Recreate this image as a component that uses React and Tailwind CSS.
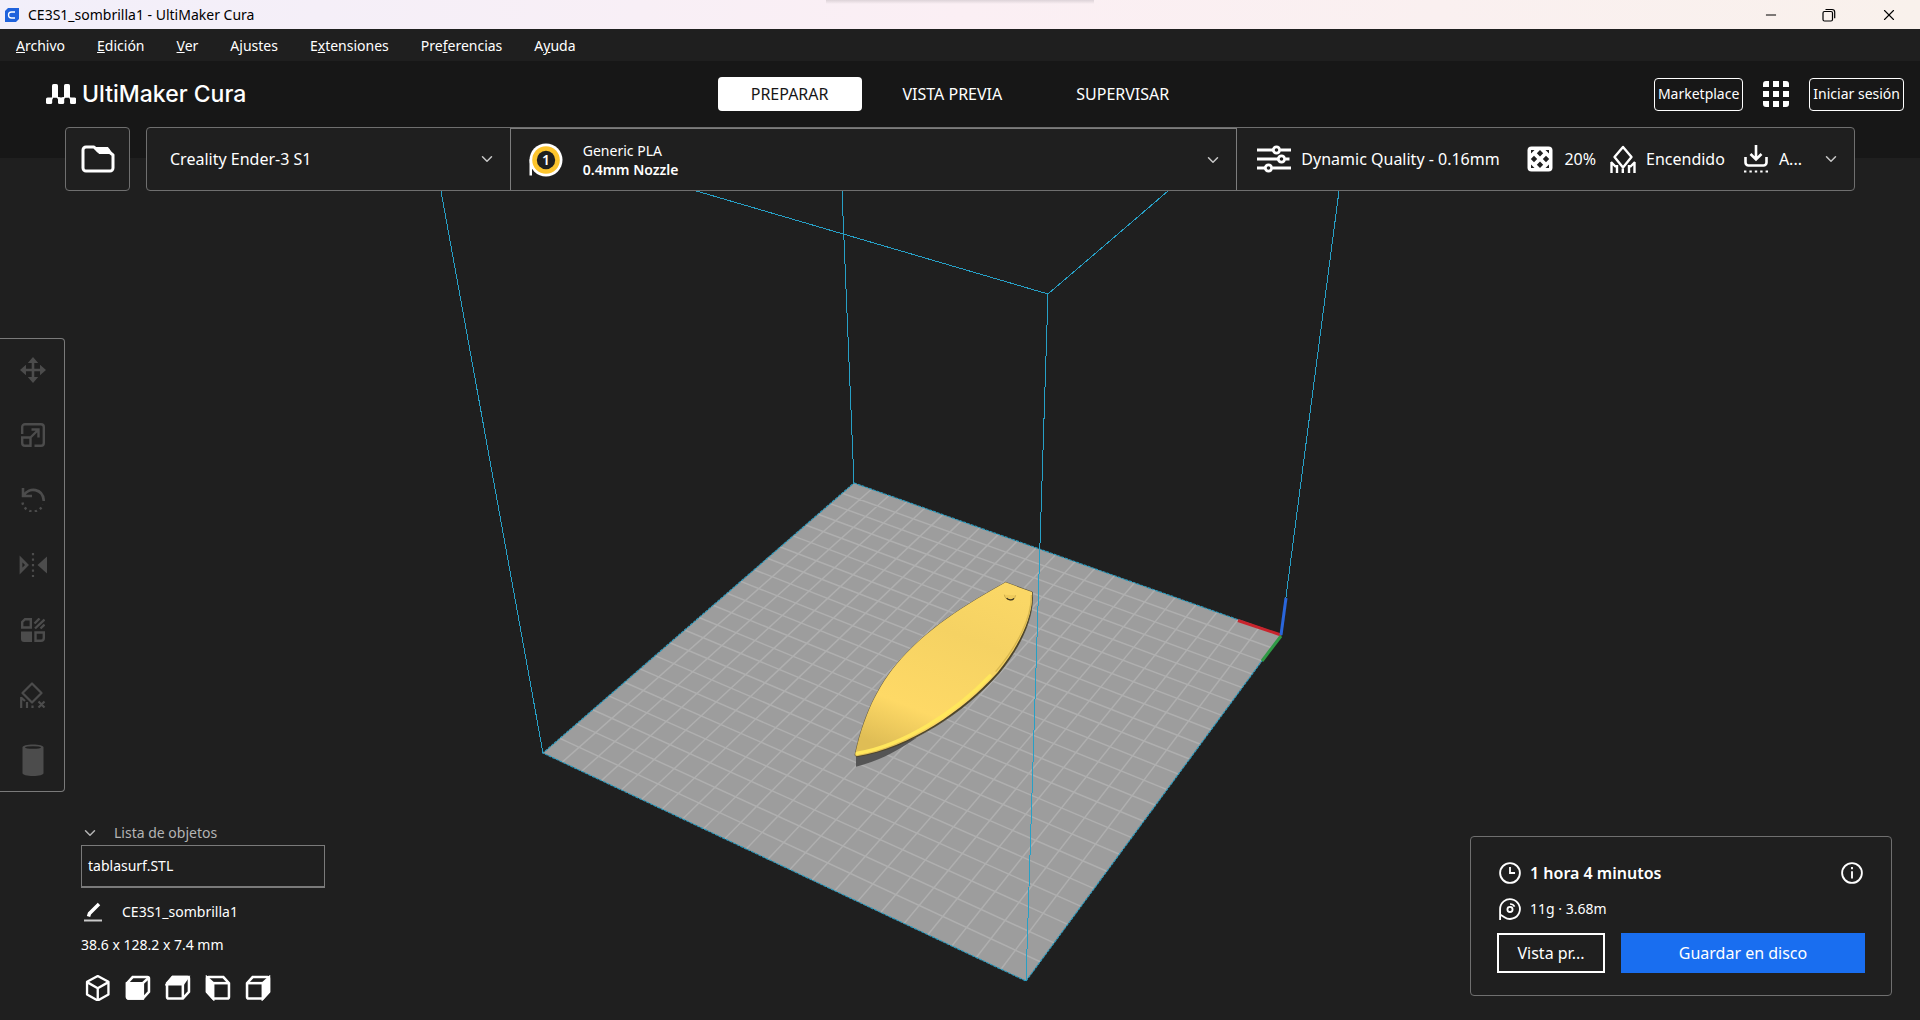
import { ChevronDown, Minus, X } from "lucide-react";

const menus = [
  ["", "A", "rchivo"],
  ["", "E", "dición"],
  ["", "V", "er"],
  ["A", "j", "ustes"],
  ["E", "x", "tensiones"],
  ["Pre", "f", "erencias"],
  ["A", "y", "uda"],
];

const stages = [
  { label: "PREPARAR", active: true },
  { label: "VISTA PREVIA", active: false },
  { label: "SUPERVISAR", active: false },
];

function Icon({ className = "h-6 w-6", children, ...props }) {
  return (
    <svg viewBox="0 0 24 24" fill="none" stroke="currentColor" strokeWidth="2" className={`shrink-0 ${className}`} aria-hidden="true" {...props}>
      {children}
    </svg>
  );
}

function MoveIcon() {
  return (
    <Icon className="h-[26px] w-[26px]" strokeWidth="2.4">
      <path d="M12 3v18M3 12h18" />
      <path d="M12 0l4.8 5.500H7.200zM12 24l4.800-5.500H7.200zM0 12l5.500-4.800v9.600zM24 12l-5.500-4.800v9.600z" fill="currentColor" stroke="none" />
    </Icon>
  );
}

function ScaleIcon() {
  return (
    <Icon strokeWidth="2.4">
      <path d="M1.2 11V4a2.8 2.8 0 0 1 2.8-2.8h16A2.8 2.8 0 0 1 22.8 4v16a2.8 2.8 0 0 1-2.8 2.8h-6.5" />
      <path d="M1.2 14.5h8.300v8.300H4a2.800 2.800 0 0 1-2.800-2.800zM9.500 14.500l8-8M10.500 6.500h7v8" />
    </Icon>
  );
}

function RotateIcon() {
  return (
    <Icon>
      <path d="M2 0v8h9M3 7C8-1 22 0 22.8 13" strokeWidth="2.6" />
      <path d="M1.5 14.5a10.6 10.6 0 0 0 20.5 2" strokeWidth="2.4" strokeDasharray="2.4 3.2" />
    </Icon>
  );
}

function MirrorIcon() {
  return (
    <Icon className="h-7 w-7" viewBox="-1 -2 28 28">
      <path d="M13 0v24" strokeWidth="2.2" strokeDasharray="2.2 3.3" />
      <path d="M1 6v12l6-6z" strokeWidth="2.8" />
      <path d="M27 3.500v17L17.500 12z" fill="currentColor" stroke="none" />
    </Icon>
  );
}

function PerModelIcon() {
  return (
    <Icon strokeWidth="2.4">
      <path d="M4 1.200h5.800v8.300H1.200V4zM14.500 14.500h8.300V20a2.800 2.800 0 0 1-2.800 2.800h-5.500z" />
      <path d="M0 13.500h11V24H3a3 3 0 0 1-3-3z" fill="currentColor" stroke="none" />
      <path d="M13.500 5.500L18.500.500M14 10.500L23.500 1.500M19.500 10.500l4-4" />
    </Icon>
  );
}

function BlockerIcon() {
  return (
    <Icon className="h-[26px] w-[26px]" viewBox="0 0 26 26" strokeWidth="2.2">
      <path d="M12 1.500l9.500 9.500-9.500 9.500L2.500 11z" strokeLinejoin="round" />
      <path d="M1.200 15v11M7 20v6M12.500 23.500v2.500M1 15.500l4 3.500M18.500 19.500l6 6M24.500 19.500l-6 6" />
    </Icon>
  );
}

function CylinderIcon() {
  return (
    <Icon className="h-8 w-6" viewBox="0 0 24 32">
      <path d="M1.500 3.500C1.500 1.500 6 .500 12 .500s10.500 1 10.500 3V29c0 2-4.500 3-10.500 3S1.500 31 1.500 29z" fill="currentColor" stroke="none" />
      <ellipse cx="12" cy="3.500" rx="8" ry="1.300" fill="#1f1f1f" stroke="none" />
    </Icon>
  );
}

const tools = [
  { label: "Mover", Glyph: MoveIcon },
  { label: "Escalar", Glyph: ScaleIcon },
  { label: "Rotar", Glyph: RotateIcon },
  { label: "Espejo", Glyph: MirrorIcon },
  { label: "Ajustes por modelo", Glyph: PerModelIcon },
  { label: "Bloqueador de soporte", Glyph: BlockerIcon },
  { label: "Cilindro", Glyph: CylinderIcon },
];

const cubeOutline = "M7 1.500h14.500a1.500 1.500 0 0 1 1.500 1.500v13l-6 6.500H3A1.500 1.500 0 0 1 1.500 21V7.500z";

const views = [
  {
    label: "Vista 3D",
    art: (
      <g strokeWidth="2.3" strokeLinejoin="round">
        <path d="M12 .5l10.500 5.700v12.400L12 24.500 1.500 18.600V6.200z" />
        <path d="M1.500 6.500L12 12.500l10.500-6M12 12.500v12" />
      </g>
    ),
  },
  {
    label: "Vista frontal",
    art: (
      <>
        <path d={cubeOutline} />
        <path d="M1.500 7.500H17v15H3L1.500 21z" fill="currentColor" />
        <path d="M17 7.500L23 2" />
      </>
    ),
  },
  {
    label: "Vista superior",
    art: (
      <>
        <path d={cubeOutline} />
        <path d="M7 1.500h15L17 8.500H1.500z" fill="currentColor" />
        <path d="M17 8v14.500" />
      </>
    ),
  },
  {
    label: "Vista izquierda",
    art: (
      <g transform="matrix(-1 0 0 1 24.5 0)">
        <path d={cubeOutline} />
        <path d="M1.500 7.500H17" />
        <path d="M17 7.500L23 2v14l-6 6.500z" fill="currentColor" />
      </g>
    ),
  },
  {
    label: "Vista derecha",
    art: (
      <>
        <path d={cubeOutline} />
        <path d="M1.500 7.500H17" />
        <path d="M17 7.500L23 2v14l-6 6.500z" fill="currentColor" />
      </>
    ),
  },
];

// Projects plate coordinates (0..1 on both axes) onto the canvas.
const [p0, p1, p2, p3] = [[854, 483], [1281, 635], [1026, 981], [543, 753]];
const dx1 = p1[0] - p2[0];
const dx2 = p3[0] - p2[0];
const dx3 = p0[0] - p1[0] + p2[0] - p3[0];
const dy1 = p1[1] - p2[1];
const dy2 = p3[1] - p2[1];
const dy3 = p0[1] - p1[1] + p2[1] - p3[1];
const det = dx1 * dy2 - dx2 * dy1;
const g = (dx3 * dy2 - dx2 * dy3) / det;
const h = (dx1 * dy3 - dx3 * dy1) / det;

function project(u, v) {
  const w = g * u + h * v + 1;
  const x = ((p1[0] - p0[0] + g * p1[0]) * u + (p3[0] - p0[0] + h * p3[0]) * v + p0[0]) / w;
  const y = ((p1[1] - p0[1] + g * p1[1]) * u + (p3[1] - p0[1] + h * p3[1]) * v + p0[1]) / w;
  return `${x.toFixed(2)} ${y.toFixed(2)}`;
}

const CELLS = 22;
const gridPath = Array.from({ length: CELLS - 1 }, (_, i) => {
  const t = (i + 1) / CELLS;
  return `M${project(t, 0)}L${project(t, 1)}M${project(0, t)}L${project(1, t)}`;
}).join("");

function BuildVolume() {
  return (
    <svg viewBox="0 191 1920 829" preserveAspectRatio="xMidYMid slice" className="absolute inset-0 h-full w-full" role="img" aria-label="Volumen de impresión">
      <defs>
        <linearGradient id="board" x1="0.7" y1="0" x2="0.3" y2="1">
          <stop offset="0" stopColor="#fad766" />
          <stop offset="0.3" stopColor="#f5d263" />
          <stop offset="0.75" stopColor="#fed966" />
          <stop offset="1" stopColor="#dfbd55" />
        </linearGradient>
      </defs>
      <path d="M854 483L1281 635L1026 981L543 753z" fill="#9d9d9d" />
      <path d={gridPath} stroke="#afafaf" strokeWidth="1.5" fill="none" />
      <path d="M854 483L1281 635L1026 981L543 753z" stroke="#2a9cc0" strokeWidth="1.2" strokeDasharray="3 1" fill="none" />

      <g transform="translate(840 570) scale(0.3333)">
        <path d="M48 550V590C110 575 170 545 230 503z" fill="#555555" />
        <path d="M45 556C62 470 100 365 170 282C245 195 330 130 497 37L577 66C584 140 542 230 477 310C375 425 215 535 50 560z" fill="#4b4328" stroke="#4b4328" strokeWidth="2" />
        <path d="M45 556C62 470 100 365 170 282C245 195 330 130 497 37L576 66C581 140 537 229 472 308C370 421 212 531 50 559z" fill="url(#board)" />
        <path d="M574 75C576 140 534 226 467 305" stroke="#d9b850" strokeWidth="4" fill="none" />
        <path d="M52 550C190 527 345 428 450 318" stroke="#ffe75c" strokeWidth="11" fill="none" strokeLinecap="round" />
        <path d="M493 74c2 20 30 22 34 2" stroke="#b89a42" strokeWidth="2" fill="#efcb5c" />
        <path d="M500 84c4 7 17 8 22 1" stroke="#3c3520" strokeWidth="4" fill="none" />
      </g>

      <g stroke="#27a0c6" strokeWidth="1" fill="none" shapeRendering="crispEdges">
        <path d="M441 191L543 753M842 191L854 483M1339 191L1281 635" />
        <path d="M693 190L1048 294L1168 191M1048 294L1026 981" />
      </g>
      <path d="M1238 620.5L1281 635" stroke="#c9242c" strokeWidth="3" />
      <path d="M1281 636L1262 661" stroke="#2f9a45" strokeWidth="3" />
      <path d="M1281 635L1286 598" stroke="#2a66dc" strokeWidth="3" />
    </svg>
  );
}

function TitleBar() {
  return (
    <div className="relative flex h-[29px] items-center bg-linear-to-r from-[#f2effa] via-[#fbeff4] to-[#f9f1ec] pl-1 text-black">
      <div className="absolute top-0 left-1/2 h-1 w-[268px] -translate-x-1/2 bg-linear-to-b from-[#ddd3d8] to-transparent" />
      <svg viewBox="0 0 16 16" className="h-4 w-4" aria-hidden="true">
        <path d="M4 1h11v11l-3 3H1V4z" fill="#1f62dc" />
        <path d="M11 5H7.500a3 3 0 0 0 0 6H11" stroke="#fff" strokeWidth="1.3" fill="none" />
      </svg>
      <h1 className="ml-2 text-sm">CE3S1_sombrilla1 - UltiMaker Cura</h1>
      <div className="ml-auto flex h-full">
        <button aria-label="Minimizar" className="grid w-[58px] place-items-center">
          <Minus className="h-4 w-4" strokeWidth={1.5} />
        </button>
        <button aria-label="Restaurar" className="grid w-[58px] place-items-center">
          <svg viewBox="0 0 14 14" className="h-3.5 w-3.5" fill="none" stroke="currentColor" strokeWidth="1.2" aria-hidden="true">
            <rect x="1" y="3.5" width="9.5" height="9.5" rx="1.5" />
            <path d="M3.500 1.500H10a2.700 2.700 0 0 1 2.700 2.700v6" />
          </svg>
        </button>
        <button aria-label="Cerrar" className="grid w-[62px] place-items-center">
          <X className="h-[18px] w-[18px]" strokeWidth={1.5} />
        </button>
      </div>
    </div>
  );
}

function MenuBar() {
  return (
    <nav className="flex h-8 items-center gap-8 px-4 pt-[2px] text-sm">
      {menus.map(([before, key, after]) => (
        <button key={before + key + after}>
          {before}
          <span className="underline">{key}</span>
          {after}
        </button>
      ))}
    </nav>
  );
}

function StageBar() {
  return (
    <header className="grid h-[66px] grid-cols-[1fr_auto_1fr] items-center px-4">
      <div className="flex items-center gap-[6px] pl-[30px]">
        <svg viewBox="0 0 30 20" className="h-5 w-[30px]" fill="currentColor" aria-hidden="true">
          <rect x="0" y="13.5" width="6.2" height="6.5" rx="1.6" />
          <rect x="12" y="13.5" width="6.2" height="6.5" rx="1.6" />
          <rect x="24" y="13.5" width="6.2" height="6.5" rx="1.6" />
          <rect x="6" y="0" width="6" height="13.8" rx="1.6" />
          <rect x="18" y="0" width="6" height="13.8" rx="1.6" />
          <path d="M4.500 14L7.500 12.500 6.500 15.500zM10 12.500l4.500 1-2 2.500zM20 12.500l-4.500 1 2 2.500zM22.500 12.500l3.500 1.500-2 1.500z" />
        </svg>
        <span className="font-['Inter'] text-[23px] leading-6 font-medium">UltiMaker Cura</span>
      </div>
      <nav className="flex gap-2">
        {stages.map(({ label, active }) => (
          <button key={label} className={`h-[34px] rounded-sm px-[33px] text-base ${active ? "bg-white text-[#171717]" : ""}`}>
            {label}
          </button>
        ))}
      </nav>
      <div className="flex items-center justify-end gap-5">
        <button className="h-[33px] rounded-sm border border-white px-[3px] text-sm">Marketplace</button>
        <button aria-label="Aplicaciones">
          <svg viewBox="0 0 26 26" className="h-[26px] w-[26px]" fill="currentColor" aria-hidden="true">
            <path d="M3 0h3v6H0V3a3 3 0 0 1 3-3zM10 0h6v6h-6zM20 0h3a3 3 0 0 1 3 3v3h-6zM0 10h6v6H0zM10 10h6v6h-6zM20 10h6v6h-6zM0 20h6v6H3a3 3 0 0 1-3-3zM10 20h6v6h-6zM20 20h6v3a3 3 0 0 1-3 3h-3z" />
          </svg>
        </button>
        <button className="h-[33px] rounded-sm border border-white px-[3px] text-sm">Iniciar sesión</button>
      </div>
    </header>
  );
}

function ConfigBar() {
  return (
    <div className="flex gap-4 px-[65px]">
      <button aria-label="Abrir archivo" className="grid h-16 w-[65px] shrink-0 place-items-center rounded-sm border border-[#6f6f6f] bg-[#1f1f1f]">
        <svg viewBox="0 0 34 28" className="h-7 w-[34px]" fill="none" stroke="currentColor" strokeWidth="3" strokeLinejoin="round" aria-hidden="true">
          <path d="M2 5a3 3 0 0 1 3-3h8l4 4h10l5 4v13a3 3 0 0 1-3 3H5a3 3 0 0 1-3-3z" />
          <path d="M13 2.500h14l4 6H18z" fill="currentColor" strokeWidth="1" />
        </svg>
      </button>
      <div className="grid h-16 flex-1 grid-cols-[363fr_728fr_617fr] rounded-sm border border-[#6f6f6f] bg-[#1f1f1f]">
        <button className="flex items-center justify-between pr-[14px] pl-[23px] text-base">
          Creality Ender-3 S1
          <ChevronDown className="h-[18px] w-[18px] text-[#c8c8c8]" />
        </button>
        <button className="flex items-center border-x border-t border-[#7d7d7d] pr-[14px] pl-[18px] text-left">
          <svg viewBox="0 0 34 34" className="h-[34px] w-[34px]" aria-hidden="true">
            <circle cx="17" cy="17" r="16.5" fill="#fff" />
            <path d="M.5 16v16.500h2.500V26h4z" fill="#fff" />
            <circle cx="17" cy="17" r="13.8" fill="#fcc42d" />
            <circle cx="17" cy="17" r="9.2" fill="#1f1f1f" />
            <text x="17" y="22" textAnchor="middle" fontSize="14" fontWeight="600" fill="#fff">1</text>
          </svg>
          <span className="ml-5 flex flex-1 flex-col text-sm leading-[19px]">
            <span>Generic PLA</span>
            <span className="font-semibold">0.4mm Nozzle</span>
          </span>
          <ChevronDown className="h-[18px] w-[18px] text-[#c8c8c8]" />
        </button>
        <button className="flex items-center pr-[14px] pl-5 text-base whitespace-nowrap">
          <svg viewBox="0 0 34 28" className="h-7 w-[34px]" fill="none" stroke="currentColor" strokeWidth="2.8" aria-hidden="true">
            <path d="M0 5h16M24 5h10M0 14h21M29 14h3.500M0 23h8M16 23h18" />
            <circle cx="19.5" cy="5" r="3.2" />
            <circle cx="24.5" cy="14" r="3.2" />
            <circle cx="11.5" cy="23" r="3.2" />
          </svg>
          <span className="ml-[10px]">Dynamic Quality - 0.16mm</span>
          <svg viewBox="0 0 26 26" className="ml-auto h-[26px] w-[26px]" aria-hidden="true">
            <rect x="0.5" y="0.5" width="25" height="25" rx="4" fill="currentColor" />
            <path
              d="M13 4l3.200 3.300L13 10.600 9.800 7.300zM13 15.400l3.200 3.300L13 22 9.800 18.700zM7 9.700l3.200 3.300L7 16.300 3.800 13zM19 9.700l3.200 3.300-3.200 3.300-3.200-3.300zM4 4h3.500L4 7.500zM22 4v3.500L18.500 4zM4 22v-3.500L7.500 22zM22 22h-3.500l3.500-3.500z"
              fill="#1f1f1f"
            />
          </svg>
          <span className="ml-[11px]">20%</span>
          <svg viewBox="0 0 26 28" className="ml-[14px] h-7 w-[26px]" fill="none" stroke="currentColor" strokeWidth="2.4" aria-hidden="true">
            <path d="M13 2l8.500 10L13 22.500 4.500 12z" strokeLinejoin="round" />
            <path d="M1.500 17v11M7 20v8M12.800 23.500v4.500M19 20v8M24.500 17v11M1 17l5 5M25 17l-5 5" />
          </svg>
          <span className="ml-[10px]">Encendido</span>
          <svg viewBox="0 0 26 28" className="ml-[18px] h-7 w-[26px]" fill="none" stroke="currentColor" strokeWidth="2.6" aria-hidden="true">
            <path d="M13 0v13M7.500 9l5.500 5.500L18.500 9M2.500 12v5.500a3 3 0 0 0 3 3h15a3 3 0 0 0 3-3V12" />
            <path d="M1 26.500h24" strokeWidth="2.2" strokeDasharray="2.4 3" />
          </svg>
          <span className="ml-[10px]">A...</span>
          <ChevronDown className="ml-5 h-[18px] w-[18px] text-[#c8c8c8]" />
        </button>
      </div>
    </div>
  );
}

function Toolbar() {
  return (
    <aside className="relative mt-[147px] flex w-[65px] flex-col gap-[3px] rounded-r-sm border border-l-0 border-[#7a7a7a] bg-[#1f1f1f] text-[#4c4c4c]">
      {tools.map(({ label, Glyph }) => (
        <button key={label} aria-label={label} disabled className="grid h-[62px] place-items-center pl-[2px]">
          <Glyph />
        </button>
      ))}
    </aside>
  );
}

function ObjectList() {
  return (
    <section className="w-[244px] text-sm">
      <button className="flex h-6 items-center gap-[15px] text-[#b4b4b4]">
        <ChevronDown className="h-[18px] w-[18px]" />
        Lista de objetos
      </button>
      <button className="flex h-[43px] w-full items-center border border-b-2 border-[#7a7a7a] px-[6px]">tablasurf.STL</button>
      <button className="mt-3 flex h-6 items-center gap-[19px]">
        <svg viewBox="0 0 20 20" className="ml-[2px] h-5 w-5" fill="none" stroke="currentColor" aria-hidden="true">
          <path d="M5.500 14.500l1-3L16 2" strokeWidth="3.5" />
          <path d="M1 18.500h18" strokeWidth="2" stroke="#c9c9c9" />
        </svg>
        CE3S1_sombrilla1
      </button>
      <p className="mt-[9px] h-6 leading-6">38.6 x 128.2 x 7.4 mm</p>
      <div className="mt-[18px] flex gap-[14px] pl-1">
        {views.map(({ label, art }) => (
          <button key={label} aria-label={label}>
            <Icon className="h-[26px] w-[26px]" viewBox="-0.5 -0.5 25.5 25.5" strokeWidth="2.5">
              {art}
            </Icon>
          </button>
        ))}
      </div>
    </section>
  );
}

function ActionPanel() {
  return (
    <section className="mb-[5px] w-[422px] rounded-sm border border-[#6f6f6f] bg-[#1f1f1f] px-[26px] pt-[25px] pb-[22px]">
      <div className="flex h-[22px] items-center px-[2px]">
        <Icon className="h-[22px] w-[22px]">
          <circle cx="12" cy="12" r="10.8" />
          <path d="M12 5.500V12h5.500" />
        </Icon>
        <strong className="ml-[9px] flex-1 text-base leading-[22px] font-semibold">1 hora 4 minutos</strong>
        <button aria-label="Información">
          <Icon className="h-[22px] w-[22px]">
            <circle cx="12" cy="12" r="10.8" />
            <path d="M12 10v8M12 5.500v2.500" />
          </Icon>
        </button>
      </div>
      <div className="mt-[14px] flex h-[22px] items-center pl-[2px]">
        <Icon className="h-[22px] w-[22px]">
          <path d="M1.200 24V12A10.800 10.800 0 1 1 6 21L1.200 18" />
          <circle cx="12" cy="12.5" r="2.8" />
          <path d="M12 6.500c2 0 4 1 5 3" strokeWidth="1.8" />
        </Icon>
        <span className="ml-[9px] text-sm">11g · 3.68m</span>
      </div>
      <div className="mt-[13px] flex gap-4 text-base">
        <button className="h-10 w-[108px] border-2 border-white">Vista pr...</button>
        <button className="h-10 flex-1 bg-[#196ef0]">Guardar en disco</button>
      </div>
    </section>
  );
}

export default function App() {
  return (
    <div className="flex min-h-screen flex-col bg-[#1f1f1f] font-['Noto_Sans',sans-serif] text-white">
      <TitleBar />
      <MenuBar />
      <div className="bg-[linear-gradient(#171717_97px,transparent_97px)]">
        <StageBar />
        <ConfigBar />
      </div>
      <main className="relative flex flex-1 flex-col overflow-hidden">
        <BuildVolume />
        <Toolbar />
        <div className="relative mt-auto flex items-end justify-between pr-7 pb-[19px] pl-[81px]">
          <ObjectList />
          <ActionPanel />
        </div>
      </main>
    </div>
  );
}
